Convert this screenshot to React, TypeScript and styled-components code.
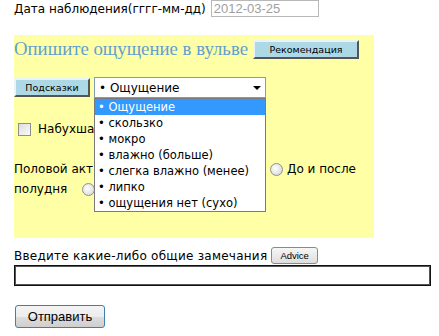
import React from "react";
import styled, { createGlobalStyle } from "styled-components";

const Global = createGlobalStyle`
  html, body { margin: 0; padding: 0; background: #fff; }
  body { font-family: "DejaVu Sans", Verdana, sans-serif; font-size: 12px; color: #000; }
`;

const Page = styled.div`
  padding: 1px 8px 0 14px;
  width: 417px;
`;

const Row = styled.div<{ $mt?: number; $gap?: number }>`
  display: flex;
  align-items: center;
  gap: ${(p) => p.$gap ?? 5}px;
  margin-top: ${(p) => p.$mt ?? 0}px;
`;

const Label = styled.span<{ $ls?: number }>`
  font-size: 12px;
  white-space: nowrap;
  letter-spacing: ${(p) => p.$ls ?? 0}px;
`;

const DateInput = styled.div`
  box-sizing: border-box;
  width: 108px;
  height: 17px;
  margin-top: -1px;
  border: 1px solid #b8b8b8;
  font-family: "Liberation Sans", Arial, sans-serif;
  font-size: 13px;
  color: #a0a0a0;
  padding: 0 2px;
  line-height: 15px;
`;

const Panel = styled.div`
  position: relative;
  margin-top: 18px;
  width: 360px;
  height: 203px;
  background: #ffffa6;
  box-sizing: border-box;
`;

const HeadRow = styled.div`
  display: flex;
  align-items: center;
  gap: 5px;
  padding-top: 3px;
`;

const Heading = styled.span`
  font-family: "Liberation Serif", "Times New Roman", serif;
  font-size: 18.8px;
  color: #62a0ce;
  white-space: nowrap;
`;

const BlueButton = styled.div<{ $w: number }>`
  box-sizing: border-box;
  width: ${(p) => p.$w}px;
  height: 19px;
  background: #add8e6;
  border: 2px solid;
  border-color: #e8f4f8 #555 #555 #e8f4f8;
  font-family: "DejaVu Sans", Verdana, sans-serif;
  font-size: 9.5px;
  color: #000;
  display: flex;
  align-items: center;
  justify-content: center;
`;

const HintRow = styled.div`
  display: flex;
  align-items: center;
  gap: 4px;
  margin-top: 17px;
`;

const SelectBox = styled.div`
  position: relative;
  box-sizing: border-box;
  width: 172px;
  height: 21px;
  background: #fff;
  border: 1px solid #7f9db9;
  display: flex;
  align-items: center;
  padding-left: 4px;
  font-size: 12px;
`;

const Arrow = styled.span`
  position: absolute;
  right: 4px;
  top: 8px;
  width: 0;
  height: 0;
  border-left: 4px solid transparent;
  border-right: 4px solid transparent;
  border-top: 4px solid #000;
`;

const DropList = styled.ul`
  position: absolute;
  left: 80px;
  top: 63px;
  z-index: 5;
  margin: 0;
  padding: 0;
  list-style: none;
  box-sizing: border-box;
  width: 172px;
  background: #fff;
  border: 1px solid #7a7a7a;
`;

const Item = styled.li<{ $active?: boolean }>`
  height: 16px;
  line-height: 16px;
  padding-left: 3px;
  font-size: 11.5px;
  white-space: nowrap;
  background: ${(p) => (p.$active ? "#3399ff" : "transparent")};
  color: ${(p) => (p.$active ? "#fff" : "#000")};
`;

const CheckRow = styled.div`
  display: flex;
  align-items: center;
  gap: 7px;
  margin-top: 24px;
  padding-left: 4px;
`;

const CheckBox = styled.span`
  box-sizing: border-box;
  width: 13px;
  height: 13px;
  border: 1px solid #8f8f8f;
  background: linear-gradient(135deg, #dcdcdc, #fbfbfb);
`;

const Radio = styled.span<{ $ml?: number }>`
  box-sizing: border-box;
  width: 13px;
  height: 13px;
  margin-left: ${(p) => p.$ml ?? 0}px;
  border-radius: 50%;
  border: 1px solid #8f8f8f;
  background: radial-gradient(circle at 40% 40%, #fff, #d0d0d0);
  flex: none;
`;

const Line = styled.div<{ $mt?: number }>`
  display: flex;
  align-items: center;
  gap: 4px;
  height: 20px;
  margin-top: ${(p) => p.$mt ?? 0}px;
`;

const Clip = styled.span<{ $w: number }>`
  display: inline-block;
  width: ${(p) => p.$w}px;
  overflow: hidden;
  white-space: nowrap;
  font-size: 12px;
`;

const AdviceButton = styled.div`
  box-sizing: border-box;
  height: 17px;
  padding: 0 8px;
  border: 1px solid #8a8a8a;
  border-radius: 3px;
  background: linear-gradient(#f6f6f6, #dedede);
  font-family: "Liberation Sans", Arial, sans-serif;
  font-size: 9.5px;
  display: flex;
  align-items: center;
`;

const TextField = styled.div`
  box-sizing: border-box;
  width: 417px;
  height: 21px;
  margin-top: 1px;
  border: 1px solid #111;
  box-shadow: inset 0 0 0 1px #555;
  background: #fff;
`;

const Submit = styled.div`
  box-sizing: border-box;
  width: 90px;
  height: 23px;
  margin: 19px 0 0 1px;
  border: 1px solid #3c7fb1;
  border-radius: 3px;
  background: linear-gradient(#f4f4f4 0%, #ececec 50%, #dddddd 51%, #cfcfcf 100%);
  font-family: "Liberation Sans", Arial, sans-serif;
  font-size: 13px;
  display: flex;
  align-items: center;
  justify-content: center;
`;

const options = [
  "Ощущение",
  "скользко",
  "мокро",
  "влажно (больше)",
  "слегка влажно (менее)",
  "липко",
  "ощущения нет (сухо)",
];

export default function App() {
  return (
    <>
      <Global />
      <Page>
        <Row>
          <Label>Дата наблюдения(гггг-мм-дд)</Label>
          <DateInput>2012-03-25</DateInput>
        </Row>
        <Panel>
          <HeadRow>
            <Heading>Опишите ощущение в вульве</Heading>
            <BlueButton $w={106}>Рекомендация</BlueButton>
          </HeadRow>
          <HintRow>
            <BlueButton $w={76}>Подсказки</BlueButton>
            <SelectBox>
              • Ощущение
              <Arrow />
            </SelectBox>
          </HintRow>
          <DropList>
            {options.map((o, i) => (
              <Item key={o} $active={i === 0}>
                • {o}
              </Item>
            ))}
          </DropList>
          <CheckRow>
            <CheckBox />
            <Label>Набухша</Label>
          </CheckRow>
          <Line $mt={23}>
            <Clip $w={252}>Половой акт</Clip>
            <Radio />
            <Label>До и после</Label>
          </Line>
          <Line>
            <Label>полудня</Label>
            <Radio $ml={11} />
          </Line>
        </Panel>
        <Row $mt={9} $gap={4}>
          <Label $ls={0.25}>Введите какие-либо общие замечания</Label>
          <AdviceButton>Advice</AdviceButton>
        </Row>
        <TextField />
        <Submit>Отправить</Submit>
      </Page>
    </>
  );
}
